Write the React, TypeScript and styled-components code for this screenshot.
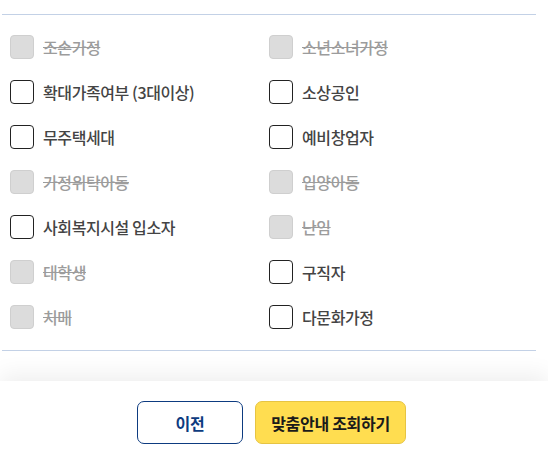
import React from "react";
import styled, { createGlobalStyle } from "styled-components";

const GlobalStyle = createGlobalStyle`
  html, body { margin: 0; padding: 0; background: #fff; }
  body { font-family: "Noto Sans CJK KR", "Noto Sans", sans-serif; }
  * { box-sizing: border-box; }
`;

const Page = styled.div`
  width: 548px;
  height: 457px;
  overflow: hidden;
  background: #fff;
  display: flex;
  flex-direction: column;
  padding-top: 14px;
`;

const OptionList = styled.div`
  margin: 0 12px 0 2px;
  border-top: 1px solid #c3d1e6;
  border-bottom: 1px solid #c3d1e6;
  padding: 20px 0 21px 8px;
  display: grid;
  grid-template-columns: 259px 1fr;
  row-gap: 21px;
`;

const Option = styled.label`
  display: flex;
  align-items: center;
  gap: 9px;
  height: 24px;
  cursor: pointer;
`;

const Box = styled.span<{ $disabled?: boolean }>`
  width: 24px;
  height: 24px;
  flex: none;
  border-radius: 4px;
  border: 1px solid ${(p) => (p.$disabled ? "#cfcfcf" : "#222")};
  background: ${(p) => (p.$disabled ? "#dcdcdc" : "#fff")};
`;

const Label = styled.span<{ $disabled?: boolean }>`
  font-size: 16px;
  letter-spacing: -0.4px;
  line-height: 24px;
  color: ${(p) => (p.$disabled ? "#9c9c9c" : "#444")};
  text-decoration: ${(p) => (p.$disabled ? "line-through" : "none")};
  font-weight: 500;
`;

const Footer = styled.div`
  margin-top: 30px;
  flex: 1;
  background: #fff;
  box-shadow: 0 -6px 22px rgba(0, 0, 0, 0.07);
  display: flex;
  justify-content: center;
  align-items: flex-start;
  gap: 12px;
  padding: 20px 5px 0 0;
`;

const Button = styled.button<{ $primary?: boolean }>`
  height: 43px;
  width: ${(p) => (p.$primary ? "151px" : "106px")};
  border-radius: 7px;
  border: 1px solid ${(p) => (p.$primary ? "#e6c443" : "#0d3b80")};
  background: ${(p) => (p.$primary ? "#ffdd50" : "#fff")};
  color: ${(p) => (p.$primary ? "#1a1a1a" : "#0d3b80")};
  font-family: "Noto Sans CJK KR", "Noto Sans", sans-serif;
  font-size: 16px;
  font-weight: 700;
  letter-spacing: -0.3px;
  cursor: pointer;
  padding: 0;
`;

const options: { label: string; disabled?: boolean }[] = [
  { label: "조손가정", disabled: true },
  { label: "소년소녀가정", disabled: true },
  { label: "확대가족여부 (3대이상)" },
  { label: "소상공인" },
  { label: "무주택세대" },
  { label: "예비창업자" },
  { label: "가정위탁아동", disabled: true },
  { label: "입양아동", disabled: true },
  { label: "사회복지시설 입소자" },
  { label: "난임", disabled: true },
  { label: "대학생", disabled: true },
  { label: "구직자" },
  { label: "치매", disabled: true },
  { label: "다문화가정" },
];

export default function App() {
  return (
    <>
      <GlobalStyle />
      <Page>
        <OptionList>
          {options.map((o) => (
            <Option key={o.label}>
              <Box $disabled={o.disabled} />
              <Label $disabled={o.disabled}>{o.label}</Label>
            </Option>
          ))}
        </OptionList>
        <Footer>
          <Button>이전</Button>
          <Button $primary>맞춤안내 조회하기</Button>
        </Footer>
      </Page>
    </>
  );
}
